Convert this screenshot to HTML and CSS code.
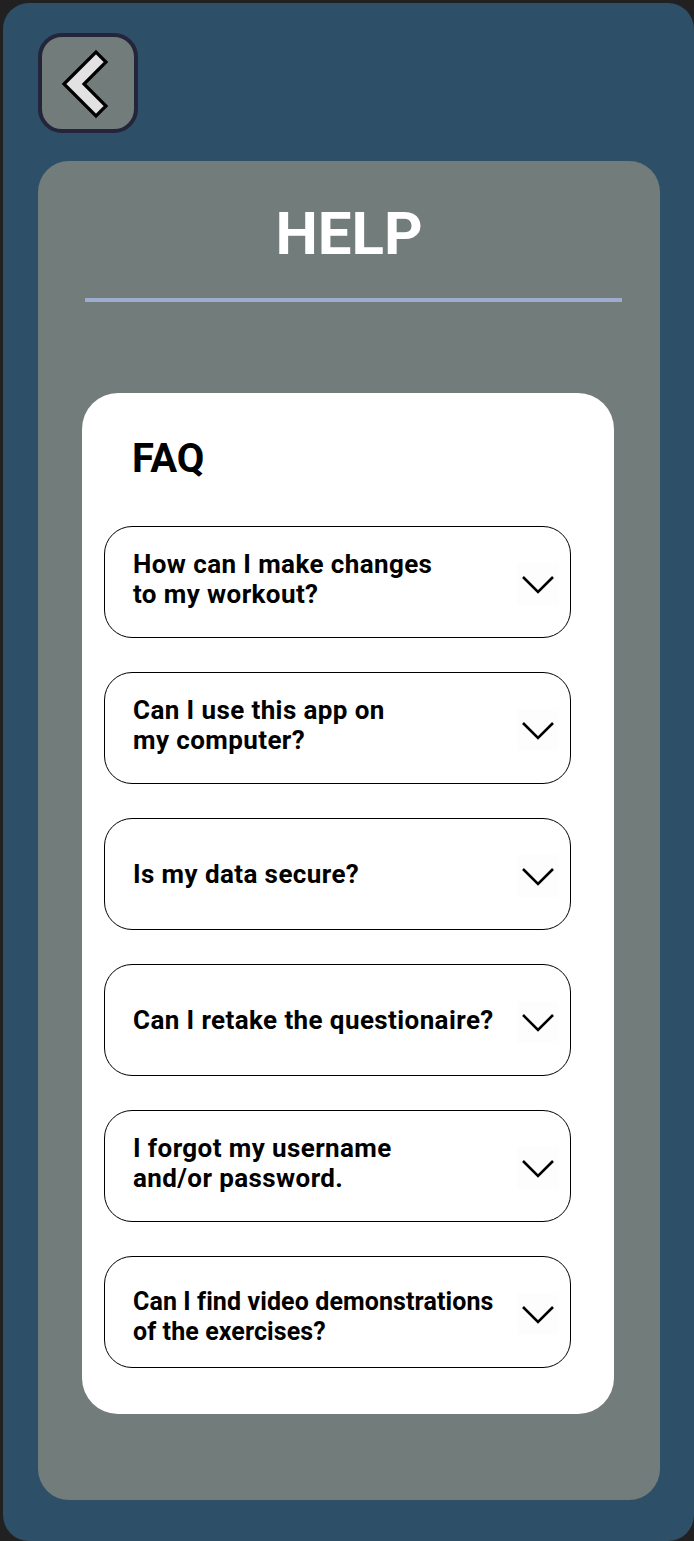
FILE: index.html
```html
<!DOCTYPE html>
<html lang="en">
<head>
<meta charset="utf-8">
<title>Help</title>
<link rel="stylesheet" href="styles.css">
</head>
<body>
<div class="frame">
  <button class="back" aria-label="Back">
    <svg width="92" height="92" viewBox="0 0 92 92">
      <polygon points="22,47 54,15 64,25 42,47 64,69 54,79" fill="#e2e2e2" stroke="#000" stroke-width="3.2" stroke-linejoin="miter"/>
    </svg>
  </button>
  <section class="panel">
    <h1 class="title">HELP</h1>
    <div class="rule"></div>
    <div class="card">
      <h2 class="faq">FAQ</h2>
      <div class="list">
        <div class="item"><span class="q two">How can I make changes<br>to my workout?</span><span class="chev"><svg width="42" height="42" viewBox="0 0 42 42"><polyline points="6,14 21,29 36,14" fill="none" stroke="#000" stroke-width="2.6"/></svg></span></div>
        <div class="item"><span class="q two">Can I use this app on<br>my computer?</span><span class="chev"><svg width="42" height="42" viewBox="0 0 42 42"><polyline points="6,14 21,29 36,14" fill="none" stroke="#000" stroke-width="2.6"/></svg></span></div>
        <div class="item"><span class="q">Is my data secure?</span><span class="chev"><svg width="42" height="42" viewBox="0 0 42 42"><polyline points="6,14 21,29 36,14" fill="none" stroke="#000" stroke-width="2.6"/></svg></span></div>
        <div class="item"><span class="q">Can I retake the questionaire?</span><span class="chev"><svg width="42" height="42" viewBox="0 0 42 42"><polyline points="6,14 21,29 36,14" fill="none" stroke="#000" stroke-width="2.6"/></svg></span></div>
        <div class="item"><span class="q two">I forgot my username<br>and/or password.</span><span class="chev"><svg width="42" height="42" viewBox="0 0 42 42"><polyline points="6,14 21,29 36,14" fill="none" stroke="#000" stroke-width="2.6"/></svg></span></div>
        <div class="item"><span class="q small">Can I find video demonstrations<br>of the exercises?</span><span class="chev"><svg width="42" height="42" viewBox="0 0 42 42"><polyline points="6,14 21,29 36,14" fill="none" stroke="#000" stroke-width="2.6"/></svg></span></div>
      </div>
    </div>
  </section>
</div>
</body>
</html>
```

FILE: styles.css
```css
html, body {
  margin: 0;
  padding: 0;
  background: #212121;
}

body {
  font-family: Roboto, "Liberation Sans", Arial, sans-serif;
}

.frame {
  margin: 3px 0 0 3px;
  width: 691px;
  height: 1538px;
  box-sizing: border-box;
  padding: 30px 0 0 35px;
  background: #2e4f68;
  border-radius: 26px;
  overflow: hidden;
}

.back {
  display: block;
  width: 100px;
  height: 100px;
  box-sizing: border-box;
  padding: 0;
  border: 4px solid #24243a;
  border-radius: 24px;
  background: #727c7a;
}

.back svg {
  display: block;
}

.panel {
  margin-top: 28px;
  width: 622px;
  height: 1339px;
  box-sizing: border-box;
  padding-top: 38px;
  background: #727c7a;
  border-radius: 31px;
}

.title {
  margin: 0;
  font-weight: 700;
  font-size: 60px;
  line-height: 70px;
  color: #ffffff;
  text-align: center;
}

.rule {
  margin: 29px 0 0 47px;
  width: 537px;
  height: 4px;
  background: #9eacd0;
}

.card {
  margin: 91px 0 0 44px;
  width: 532px;
  height: 1021px;
  box-sizing: border-box;
  padding: 42px 0 0 22px;
  background: #ffffff;
  border-radius: 36px;
}

.faq {
  margin: 0 0 0 28px;
  font-weight: 700;
  font-size: 40px;
  line-height: 47px;
  color: #000;
}

.list {
  margin-top: 44px;
  display: flex;
  flex-direction: column;
  gap: 34px;
}

.item {
  width: 467px;
  height: 112px;
  box-sizing: border-box;
  border: 1.7px solid #000;
  border-radius: 28px;
  display: flex;
  align-items: center;
  justify-content: space-between;
  padding: 0 11px 0 28px;
}

.q {
  font-weight: 700;
  font-size: 26px;
  line-height: 30px;
  letter-spacing: 0.4px;
  color: #000;
  white-space: nowrap;
}

.q.two {
  padding-bottom: 7px;
}

.q.small {
  font-size: 25px;
  letter-spacing: 0.1px;
  padding-top: 10px;
}

.chev {
  flex: none;
  width: 42px;
  height: 42px;
  margin-top: 4px;
  background: #fdfdfd;
}

.chev svg {
  display: block;
}
```
